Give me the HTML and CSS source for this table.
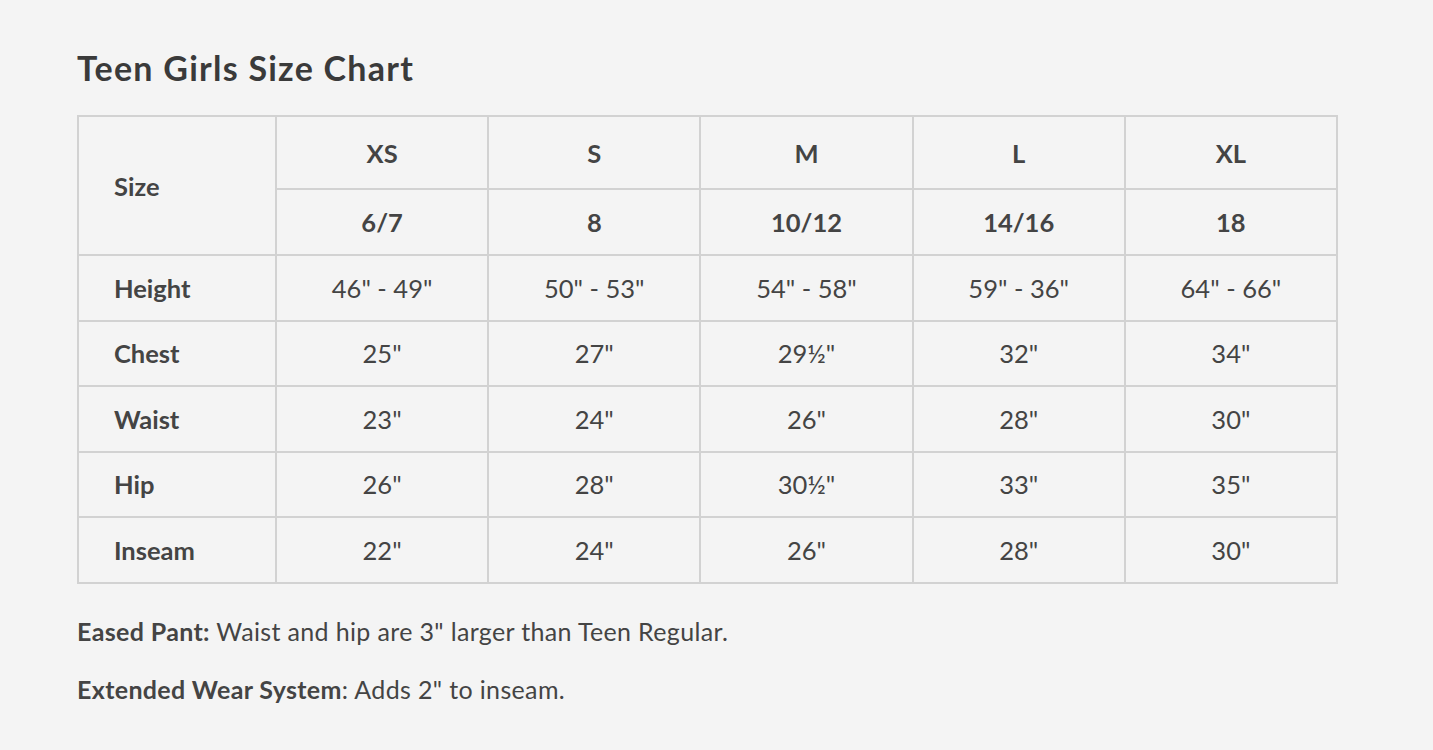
FILE: index.html
```html
<!DOCTYPE html>
<html lang="en">
<head>
<meta charset="utf-8">
<title>Teen Girls Size Chart</title>
<link rel="stylesheet" href="styles.css">
</head>
<body>
<main class="page">
  <h1 class="title">Teen Girls Size Chart</h1>
  <table class="chart">
    <colgroup>
      <col class="col-label">
      <col><col><col><col><col>
    </colgroup>
    <tbody>
      <tr class="row-h1">
        <th class="label" rowspan="2">Size</th>
        <th>XS</th><th>S</th><th>M</th><th>L</th><th>XL</th>
      </tr>
      <tr class="row-h2">
        <th>6/7</th><th>8</th><th>10/12</th><th>14/16</th><th>18</th>
      </tr>
      <tr>
        <th class="label">Height</th>
        <td>46" - 49"</td><td>50" - 53"</td><td>54" - 58"</td><td>59" - 36"</td><td>64" - 66"</td>
      </tr>
      <tr>
        <th class="label">Chest</th>
        <td>25"</td><td>27"</td><td>29½"</td><td>32"</td><td>34"</td>
      </tr>
      <tr>
        <th class="label">Waist</th>
        <td>23"</td><td>24"</td><td>26"</td><td>28"</td><td>30"</td>
      </tr>
      <tr>
        <th class="label">Hip</th>
        <td>26"</td><td>28"</td><td>30½"</td><td>33"</td><td>35"</td>
      </tr>
      <tr>
        <th class="label">Inseam</th>
        <td>22"</td><td>24"</td><td>26"</td><td>28"</td><td>30"</td>
      </tr>
    </tbody>
  </table>
  <p class="note"><strong>Eased Pant:</strong> Waist and hip are 3" larger than Teen Regular.</p>
  <p class="note"><strong>Extended Wear System</strong>: Adds 2" to inseam.</p>
</main>
</body>
</html>
```

FILE: styles.css
```css
html, body {
  margin: 0;
  padding: 0;
  background: #f4f4f4;
}

body {
  font-family: Lato, "Open Sans", "Liberation Sans", sans-serif;
  color: #444;
}

.page {
  padding: 46px 0 0 77px;
}

.title {
  margin: 0 0 25px 0;
  font-size: 34px;
  font-weight: 700;
  letter-spacing: 1.25px;
  color: #3a3a3a;
  line-height: 44px;
}

.chart {
  border-collapse: collapse;
  width: 1261px;
  table-layout: fixed;
  font-size: 25.5px;
}

.col-label {
  width: 198px;
}

.chart th,
.chart td {
  border: 2px solid #d2d2d2;
  text-align: center;
  height: 63.5px;
  padding: 0;
  color: #444;
}

.chart th {
  font-weight: 700;
}

.chart td {
  font-weight: 400;
}

.chart .label {
  text-align: left;
  padding-left: 35px;
}

.row-h1 th {
  height: 71px;
}

.row-h2 th {
  height: 64px;
}

.note {
  margin: 32px 0 0 0;
  font-size: 25px;
  letter-spacing: 0.35px;
  line-height: 30px;
  color: #444;
}

.note + .note {
  margin-top: 28px;
}

.note strong {
  font-weight: 700;
}
```
